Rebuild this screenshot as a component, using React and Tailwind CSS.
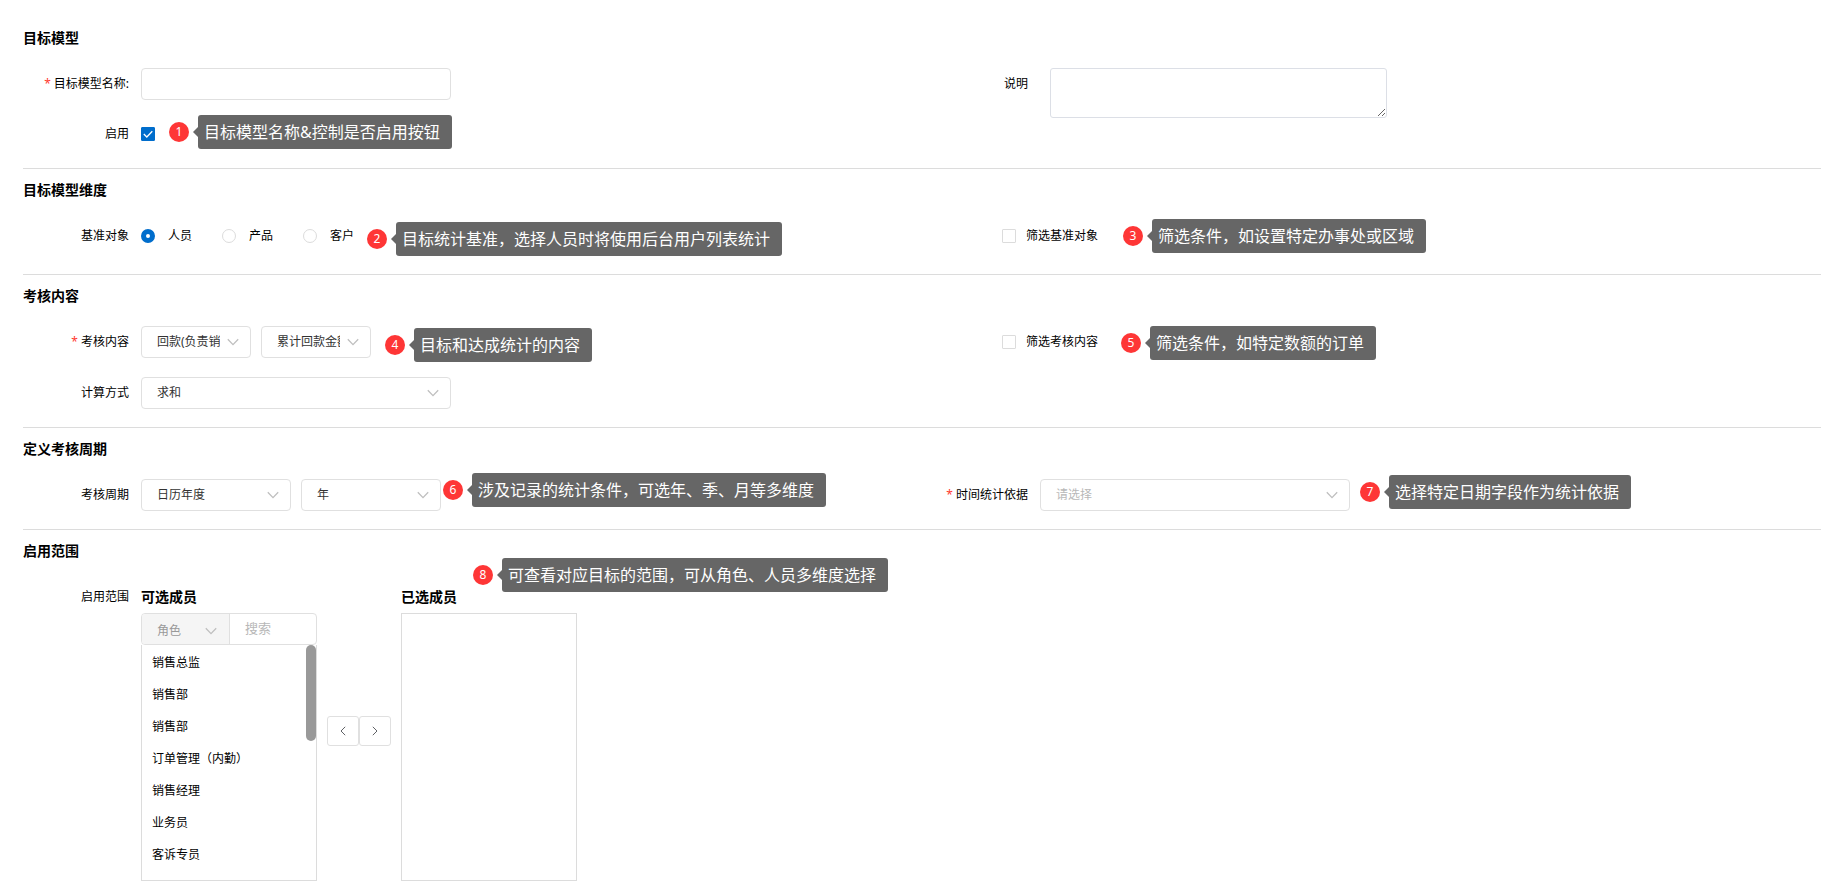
import React, { useState } from "react";
import clsx from "clsx";

const ROLES = [
  "销售总监",
  "销售部",
  "销售部",
  "订单管理（内勤）",
  "销售经理",
  "业务员",
  "客诉专员",
];

const BASE_OBJECTS = ["人员", "产品", "客户"];

const Section = ({ title, className, children }) => (
  <section
    className={clsx("border-b border-[#dcdcdc] pt-[11px]", className)}
  >
    <h2 className="text-sm leading-5 font-bold mb-5">{title}</h2>
    <div className="grid grid-cols-2 items-start">{children}</div>
  </section>
);

const Row = ({ label, htmlFor, required, children }) => (
  <div className="relative flex items-center gap-3 min-h-8">
    <label htmlFor={htmlFor} className="w-[106px] shrink-0 text-right">
      {required && <span className="text-[#ff3b30] mr-[3px]">*</span>}
      {label}
    </label>
    {children}
  </div>
);

const Chevron = ({ className }) => (
  <svg
    viewBox="0 0 12 8"
    fill="none"
    stroke="currentColor"
    strokeWidth="1.3"
    className={clsx(
      "absolute top-1/2 -translate-y-1/2 w-3 h-2 text-[#bfbfbf] pointer-events-none",
      className
    )}
  >
    <path d="M0.8 1.2 6 6.6 11.2 1.2" />
  </svg>
);

const Select = ({ id, label, options, placeholder, className }) => (
  <div className={clsx("relative", className)}>
    <select
      id={id}
      aria-label={label}
      className={clsx(
        "appearance-none w-full h-8 pl-[15px] pr-[30px] border border-[#e0e0e0] rounded bg-white outline-none",
        placeholder ? "text-[#b8b8b8]" : "text-[#333]"
      )}
    >
      {placeholder && <option value="">{placeholder}</option>}
      {options.map((o) => (
        <option key={o}>{o}</option>
      ))}
    </select>
    <Chevron className="right-3" />
  </div>
);

const Checkbox = ({ id, defaultChecked }) => (
  <span className="relative w-3.5 h-3.5 shrink-0">
    <input
      id={id}
      type="checkbox"
      defaultChecked={defaultChecked}
      className="peer appearance-none block w-3.5 h-3.5 border border-[#dcdcdc] rounded-[1px] bg-white checked:bg-[#006dcc] checked:border-[#006dcc]"
    />
    <svg
      viewBox="0 0 14 14"
      fill="none"
      stroke="white"
      strokeWidth="1.3"
      className="absolute inset-0 w-3.5 h-3.5 opacity-0 peer-checked:opacity-100 pointer-events-none"
    >
      <path d="M2.8 7 5.8 10 11.3 4.2" />
    </svg>
  </span>
);

// Numbered callout that floats over the form
const Tip = ({ no, className, children }) => (
  <div
    className={clsx(
      "absolute z-10 flex items-center whitespace-nowrap text-white",
      className
    )}
  >
    <span className="flex items-center justify-center w-5 h-5 rounded-full bg-[#fe3636] text-xs mr-1">
      {no}
    </span>
    <span className="border-y-5 border-y-transparent border-r-5 border-r-[#666]" />
    <span className="h-[34px] leading-[34px] pl-1.5 pr-3 rounded-[3px] bg-[#666] text-base">
      {children}
    </span>
  </div>
);

const App = () => {
  const [base, setBase] = useState("人员");

  return (
    <main className="pl-[23px] pr-3.5 pt-[17px] pb-3.5 bg-white text-black text-xs font-['Noto_Sans','Noto_Sans_CJK_SC',sans-serif]">
      <Section title="目标模型" className="pb-[18px]">
        <div className="flex flex-col gap-[18px]">
          <Row label="目标模型名称:" htmlFor="name" required>
            <input
              id="name"
              type="text"
              className="w-[310px] h-8 px-4 border border-[#e0e0e0] rounded outline-none"
            />
          </Row>
          <Row label="启用" htmlFor="enabled">
            <Checkbox id="enabled" defaultChecked />
            <Tip no={1} className="left-[146px] -top-[3px]">
              目标模型名称&amp;控制是否启用按钮
            </Tip>
          </Row>
        </div>
        <div className="flex items-start gap-[22px]">
          <label htmlFor="remark" className="w-[106px] text-right leading-8">
            说明
          </label>
          <textarea
            id="remark"
            className="w-[337px] h-[50px] p-2 border border-[#dcdfe6] rounded-[3px] outline-none resize"
          />
        </div>
      </Section>

      <Section title="目标模型维度" className="pb-[22px]">
        <Row label="基准对象">
          <div className="flex gap-[30px]">
            {BASE_OBJECTS.map((item) => (
              <label key={item} className="flex items-center gap-[13px]">
                <input
                  type="radio"
                  name="base"
                  checked={base === item}
                  onChange={() => setBase(item)}
                  className="appearance-none w-3.5 h-3.5 border border-[#dcdcdc] rounded-full bg-white checked:border-5 checked:border-[#006dcc]"
                />
                {item}
              </label>
            ))}
          </div>
          <Tip no={2} className="left-[344px] top-0.5">
            目标统计基准，选择人员时将使用后台用户列表统计
          </Tip>
        </Row>
        <div className="relative flex items-center gap-2.5 min-h-8 pl-20">
          <Checkbox id="filterBase" />
          <label htmlFor="filterBase">筛选基准对象</label>
          <Tip no={3} className="left-[201px] -top-px">
            筛选条件，如设置特定办事处或区域
          </Tip>
        </div>
      </Section>

      <Section title="考核内容" className="pb-[18px]">
        <div className="flex flex-col gap-[19px]">
          <Row label="考核内容" htmlFor="content" required>
            <div className="flex gap-2.5">
              <Select
                id="content"
                options={["回款(负责销售)"]}
                className="w-[110px]"
              />
              <Select
                label="统计字段"
                options={["累计回款金额"]}
                className="w-[110px]"
              />
            </div>
            <Tip no={4} className="left-[362px] top-0.5">
              目标和达成统计的内容
            </Tip>
          </Row>
          <Row label="计算方式" htmlFor="method">
            <Select id="method" options={["求和"]} className="w-[310px]" />
          </Row>
        </div>
        <div className="relative flex items-center gap-2.5 min-h-8 pl-20">
          <Checkbox id="filterContent" />
          <label htmlFor="filterContent">筛选考核内容</label>
          <Tip no={5} className="left-[199px] top-0">
            筛选条件，如特定数额的订单
          </Tip>
        </div>
      </Section>

      <Section title="定义考核周期" className="pb-[18px]">
        <Row label="考核周期" htmlFor="period">
          <div className="flex gap-2.5">
            <Select id="period" options={["日历年度"]} className="w-[150px]" />
            <Select label="周期单位" options={["年"]} className="w-[140px]" />
          </div>
          <Tip no={6} className="left-[420px] -top-1.5">
            涉及记录的统计条件，可选年、季、月等多维度
          </Tip>
        </Row>
        <Row label="时间统计依据" htmlFor="dateField" required>
          <Select
            id="dateField"
            placeholder="请选择"
            options={[]}
            className="w-[310px]"
          />
          <Tip no={7} className="left-[438px] -top-1">
            选择特定日期字段作为统计依据
          </Tip>
        </Row>
      </Section>

      <Section title="启用范围" className="border-b-0">
        <div className="relative flex gap-3">
          <span className="w-[106px] shrink-0 text-right leading-8">
            启用范围
          </span>
          <div className="flex gap-2.5">
            <div className="w-44">
              <h3 className="text-sm leading-8 font-bold">可选成员</h3>
              <div className="flex h-8 border border-[#e0e0e0] rounded">
                <div className="relative w-22 shrink-0 border-r border-[#e0e0e0]">
                  <select
                    aria-label="成员类型"
                    className="appearance-none w-full h-full pl-[15px] pr-[30px] pt-1 rounded-l-[3px] bg-[#f5f5f5] text-[#999] outline-none"
                  >
                    <option>角色</option>
                  </select>
                  <Chevron className="right-3 mt-0.5" />
                </div>
                <input
                  type="text"
                  aria-label="搜索"
                  placeholder="搜索"
                  className="w-full min-w-0 pl-[15px] text-[13px] outline-none placeholder:text-[#b8b8b8]"
                />
              </div>
              <div className="relative h-59 border border-t-0 border-[#dcdcdc] overflow-hidden">
                <ul className="pt-0.5">
                  {ROLES.map((role, i) => (
                    <li key={i} className="h-8 leading-8 pl-2.5">
                      {role}
                    </li>
                  ))}
                </ul>
                <span className="absolute right-0 top-0 w-2.5 h-24 rounded-full bg-[#999]" />
              </div>
            </div>
            <div className="flex pt-[135px]">
              <button
                type="button"
                aria-label="移除"
                className="flex items-center justify-center w-8 h-[30px] border border-[#e0e0e0] rounded-[3px] text-[#606266]"
              >
                <svg viewBox="0 0 6 10" fill="none" stroke="currentColor" className="w-1.5 h-2.5">
                  <path d="M5.2 0.8 1 5 5.2 9.2" />
                </svg>
              </button>
              <button
                type="button"
                aria-label="添加"
                className="flex items-center justify-center w-8 h-[30px] border border-[#e0e0e0] rounded-[3px] text-[#606266]"
              >
                <svg viewBox="0 0 6 10" fill="none" stroke="currentColor" className="w-1.5 h-2.5">
                  <path d="M0.8 0.8 5 5 0.8 9.2" />
                </svg>
              </button>
            </div>
            <div className="w-44">
              <h3 className="text-sm leading-8 font-bold">已选成员</h3>
              <div className="h-67 border border-[#dcdcdc]" />
            </div>
          </div>
          <Tip no={8} className="left-[450px] -top-[23px]">
            可查看对应目标的范围，可从角色、人员多维度选择
          </Tip>
        </div>
      </Section>
    </main>
  );
};

export default App;
